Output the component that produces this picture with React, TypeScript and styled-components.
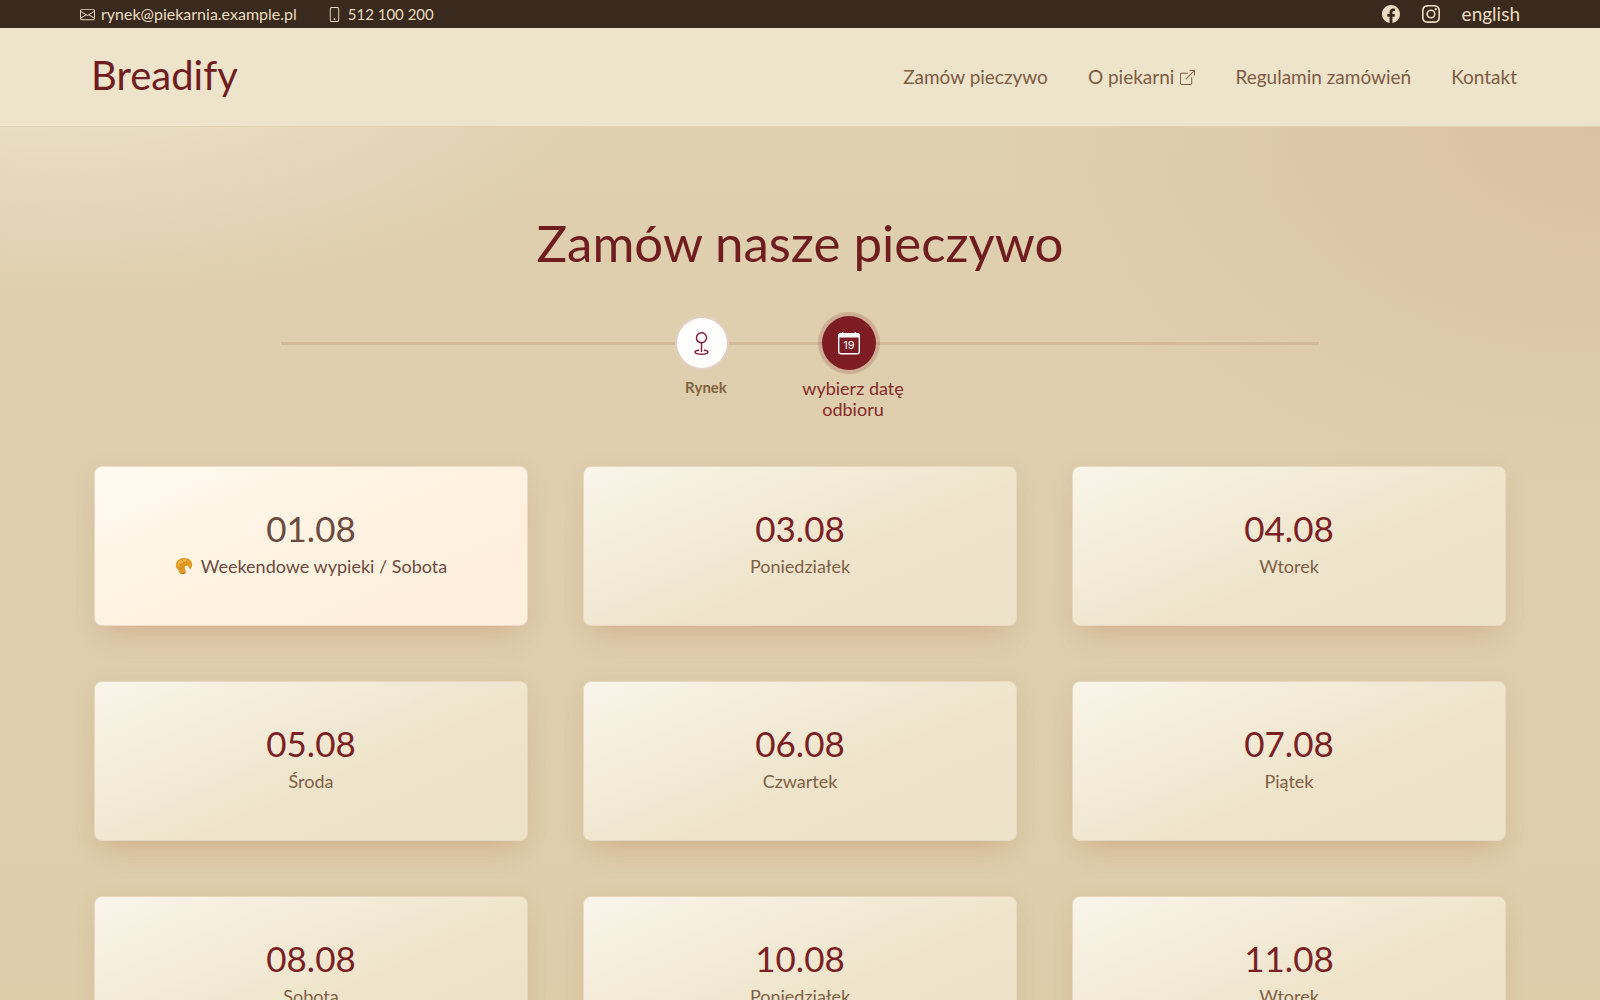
import React from "react";
import styled, { createGlobalStyle } from "styled-components";
import {
  BsBoxArrowUpRight,
  BsEnvelope,
  BsFacebook,
  BsGeo,
  BsInstagram,
  BsPhone,
} from "react-icons/bs";

const GlobalStyle = createGlobalStyle`
  * { box-sizing: border-box; }
  html { background: #decead; }
  body { margin: 0; font-family: Lato, "Open Sans", sans-serif; color: #7d5c43; }
  a { color: inherit; text-decoration: none; }
  svg { display: block; flex: none; }
`;

const Page = styled.div`
  min-height: 100vh;
  background:
    radial-gradient(ellipse 720px 320px at 4% 40px, rgba(243, 234, 215, 0.75), rgba(240, 225, 190, 0) 80%),
    radial-gradient(ellipse 620px 400px at 100% 120px, rgba(212, 178, 148, 0.48), rgba(214, 178, 148, 0) 96%),
    linear-gradient(180deg, #dfd0af 0%, #decead 50%, #ddcda9 100%);
`;

const TopBar = styled.div`
  display: flex;
  justify-content: space-between;
  align-items: center;
  height: 28px;
  padding: 0 80px;
  background: #3a291d;
  color: #eadcc0;
`;

const Contacts = styled.div`
  display: flex;
  gap: 30px;
  line-height: 20px;
`;

const ContactLink = styled.a<{ $small?: boolean }>`
  display: flex;
  align-items: center;
  gap: 6px;
  font-size: ${(p) => (p.$small ? 15 : 16)}px;
`;

const Social = styled.div`
  display: flex;
  align-items: center;
  gap: 22px;
  font-size: 19px;
  line-height: 24px;
`;

const Header = styled.header`
  display: flex;
  justify-content: space-between;
  align-items: center;
  height: 99px;
  padding: 0 83px 0 91px;
  background: #eee3cb;
  border-bottom: 1px solid #e0d2b6;
`;

const Logo = styled.a`
  padding-bottom: 4px;
  font-size: 40px;
  line-height: 48px;
  color: #6f1d20;
`;

const Nav = styled.nav`
  display: flex;
  gap: 40px;
  font-size: 19px;
  line-height: 24px;
`;

const NavLink = styled.a`
  display: flex;
  align-items: center;
  gap: 6px;
`;

const Main = styled.main`
  display: flex;
  flex-direction: column;
  align-items: center;
  padding: 84px 94px 55px;
`;

const Title = styled.h1`
  margin: 0;
  font-size: 51px;
  line-height: 64px;
  font-weight: 400;
  color: #701d1f;
  text-align: center;
`;

const Steps = styled.ol`
  display: flex;
  justify-content: center;
  gap: 27px;
  width: calc(100% - 374px);
  height: 116px;
  margin: 38px 0 0;
  padding: 0 50px 0 0;
  list-style: none;
  background: linear-gradient(#d5b99b, #d5b99b) 0 29px / 100% 3px no-repeat;
`;

const Step = styled.li`
  display: flex;
  flex-direction: column;
  align-items: center;
  width: 120px;
`;

const StepMark = styled.span<{ $active?: boolean }>`
  display: flex;
  align-items: center;
  justify-content: center;
  width: ${(p) => (p.$active ? 54 : 50)}px;
  height: ${(p) => (p.$active ? 54 : 50)}px;
  margin: ${(p) => (p.$active ? "3px 0 8px" : "5px 0 9px")};
  border-radius: 50%;
  color: ${(p) => (p.$active ? "#fff" : "#86203a")};
  background: ${(p) => (p.$active ? "#7d1c22" : "#fffefc")};
  box-shadow: 0 0 0 ${(p) => (p.$active ? "4px rgba(125, 28, 34, 0.18)" : "2px #e2cfc4")};
`;

const StepLabel = styled.span<{ $active?: boolean }>`
  width: 100%;
  padding-left: 9px;
  text-align: center;
  font-size: ${(p) => (p.$active ? 18 : 15)}px;
  line-height: 21px;
  font-weight: ${(p) => (p.$active ? 400 : 700)};
  color: ${(p) => (p.$active ? "#872a28" : "#80623f")};
`;

const Grid = styled.div`
  display: grid;
  grid-template-columns: repeat(3, minmax(0, 1fr));
  gap: 55px;
  width: 100%;
  margin-top: 37px;
`;

const Card = styled.button<{ $weekend?: boolean }>`
  display: flex;
  flex-direction: column;
  align-items: center;
  height: 160px;
  padding: 38px 16px 0;
  border: 1px solid ${(p) => (p.$weekend ? "#f0dac6" : "#e8d8c0")};
  border-radius: 8px;
  font-family: inherit;
  color: ${(p) => (p.$weekend ? "#6b4a3f" : "#7e6045")};
  background: ${(p) =>
    p.$weekend
      ? "linear-gradient(157deg, #fffaf0 0%, #fff1df 58%, #fff0de 100%)"
      : "linear-gradient(157deg, #faf5ea 0%, #efe4cb 58%, #ede2ca 100%)"};
  box-shadow: 0 20px 26px -12px rgba(195, 140, 110, 0.32), 0 4px 22px rgba(170, 120, 70, 0.09);
  cursor: pointer;
`;

const CardDate = styled.span<{ $weekend?: boolean }>`
  font-size: 35px;
  line-height: 46px;
  color: ${(p) => (p.$weekend ? "#6b4a3f" : "#7a1f23")};
`;

const CardDay = styled.span`
  display: flex;
  align-items: center;
  gap: 8px;
  font-size: 18px;
  line-height: 30px;
`;

const Croissant = () => (
  <svg width="18" height="18" viewBox="0 0 18 18" aria-hidden="true">
    <path
      d="M.8 8.500C.8 4.500 4 1.300 8.500 1c5-.3 8.900 2.600 8.700 6.600-.1 2.600-1.200 4.400-2.400 4.200-1.200-.3-.8-2-2.100-2.700-1.500-.7-2.900.3-2.900 2 0 2 1.400 3 .9 4.400-.6 1.500-2.900 1.900-4.800 1.200-2-.8-2.500-2.300-2.300-3.900C1.700 11.800.8 10.300.8 8.500z"
      fill="#e09a26"
    />
    <path d="M2.200 7.500C3 4.500 5.800 2.300 8.800 2.200c2.600 0 4.600.9 5.900 2.600-2-.7-4-.7-5.700.2C6.700 6.200 5 7.500 3.400 9.800z" fill="#f0b443" />
    <path
      d="M3.500 12.300c1.900-.1 3.600-.8 5-2M2.300 6.700c2 .2 4 1 5.500 2.400M6.800 2.200c1.200 1.500 1.900 3.200 2.300 5M12.500 2.300c-.8 1.500-1.200 3.100-1.200 5"
      stroke="#c77d1c"
      strokeWidth=".6"
      fill="none"
    />
    <path d="M4.600 15.800c1.700.9 4.400.8 6-.5-.4 1.600-2.600 2.100-4.500 1.500-.7-.2-1.200-.5-1.500-1z" fill="#a8580f" />
  </svg>
);

const CalendarIcon = () => (
  <svg width="24" height="24" viewBox="0 0 24 24" aria-hidden="true">
    <rect x="1.700" y="2.700" width="20.600" height="20" rx="2.200" fill="none" stroke="currentColor" strokeWidth="1.400" />
    <path d="M1 6.500V4.500A2.500 2.500 0 0 1 3.500 2H5V1h1.400v1h11.200V1H19v1h1.500A2.500 2.500 0 0 1 23 4.500v2z" fill="currentColor" />
    <text x="12" y="18" textAnchor="middle" fontSize="11" fontFamily="Inter, sans-serif" fill="currentColor">
      19
    </text>
  </svg>
);

const days = [
  { date: "01.08", day: "Weekendowe wypieki / Sobota", weekend: true },
  { date: "03.08", day: "Poniedziałek" },
  { date: "04.08", day: "Wtorek" },
  { date: "05.08", day: "Środa" },
  { date: "06.08", day: "Czwartek" },
  { date: "07.08", day: "Piątek" },
  { date: "08.08", day: "Sobota" },
  { date: "10.08", day: "Poniedziałek" },
  { date: "11.08", day: "Wtorek" },
];

export default function App() {
  return (
    <Page>
      <GlobalStyle />
      <TopBar>
        <Contacts>
          <ContactLink href="mailto:rynek@piekarnia.example.pl">
            <BsEnvelope size={15} />
            rynek@piekarnia.example.pl
          </ContactLink>
          <ContactLink href="tel:512100200" $small>
            <BsPhone size={15} />
            512 100 200
          </ContactLink>
        </Contacts>
        <Social>
          <a href="#facebook" aria-label="Facebook">
            <BsFacebook size={18} />
          </a>
          <a href="#instagram" aria-label="Instagram">
            <BsInstagram size={18} />
          </a>
          <a href="#english">english</a>
        </Social>
      </TopBar>
      <Header>
        <Logo href="#start">Breadify</Logo>
        <Nav>
          <NavLink href="#zamow">Zamów pieczywo</NavLink>
          <NavLink href="#piekarnia">
            O piekarni
            <BsBoxArrowUpRight size={15} />
          </NavLink>
          <NavLink href="#regulamin">Regulamin zamówień</NavLink>
          <NavLink href="#kontakt">Kontakt</NavLink>
        </Nav>
      </Header>
      <Main>
        <Title>Zamów nasze pieczywo</Title>
        <Steps>
          <Step>
            <StepMark>
              <BsGeo size={23} />
            </StepMark>
            <StepLabel>Rynek</StepLabel>
          </Step>
          <Step aria-current="step">
            <StepMark $active>
              <CalendarIcon />
            </StepMark>
            <StepLabel $active>wybierz datę odbioru</StepLabel>
          </Step>
        </Steps>
        <Grid>
          {days.map((d) => (
            <Card key={d.date} type="button" $weekend={d.weekend}>
              <CardDate $weekend={d.weekend}>{d.date}</CardDate>
              <CardDay>
                {d.weekend && <Croissant />}
                {d.day}
              </CardDay>
            </Card>
          ))}
        </Grid>
      </Main>
    </Page>
  );
}
